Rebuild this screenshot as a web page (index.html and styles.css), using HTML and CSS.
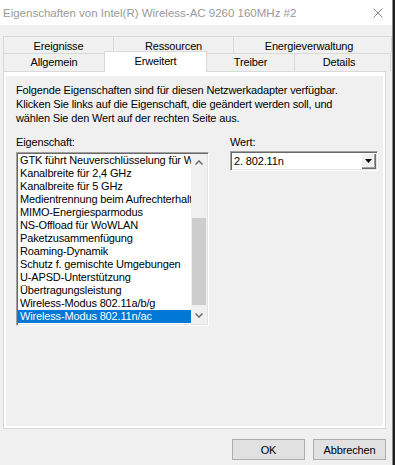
FILE: index.html
```html
<!DOCTYPE html>
<html lang="de">
<head>
<meta charset="utf-8">
<title>Eigenschaften</title>
<link rel="stylesheet" href="styles.css">
</head>
<body>
<div class="window">
  <div class="titlebar">
    <span class="title">Eigenschaften von Intel(R) Wireless-AC 9260 160MHz #2</span>
    <svg class="close" width="10" height="10" viewBox="0 0 10 10"><path d="M0.5 0.5 L9.5 9.5 M9.5 0.5 L0.5 9.5" stroke="#8c8c8c" stroke-width="1" fill="none"/></svg>
  </div>
  <div class="tabs">
    <div class="tabrow row1">
      <div class="tab t-ereig">Ereignisse</div>
      <div class="tab t-ress">Ressourcen</div>
      <div class="tab t-energ last">Energieverwaltung</div>
    </div>
    <div class="tabrow row2">
      <div class="tab t-allg">Allgemein</div>
      <div class="tab t-erw selected">Erweitert</div>
      <div class="tab t-treib">Treiber</div>
      <div class="tab t-det last">Details</div>
    </div>
  </div>
  <div class="panel">
    <div class="page">
      <p class="intro">Folgende Eigenschaften sind für diesen Netzwerkadapter verfügbar.<br>Klicken Sie links auf die Eigenschaft, die geändert werden soll, und<br>wählen Sie den Wert auf der rechten Seite aus.</p>
      <div class="fields">
        <div class="col col-left">
          <div class="label">Eigenschaft:</div>
          <div class="listbox">
            <div class="items">
              <div class="item">GTK führt Neuverschlüsselung für WoWLAN durch</div>
              <div class="item">Kanalbreite für 2,4 GHz</div>
              <div class="item">Kanalbreite für 5 GHz</div>
              <div class="item">Medientrennung beim Aufrechterhalten</div>
              <div class="item">MIMO-Energiesparmodus</div>
              <div class="item">NS-Offload für WoWLAN</div>
              <div class="item">Paketzusammenfügung</div>
              <div class="item">Roaming-Dynamik</div>
              <div class="item">Schutz f. gemischte Umgebungen</div>
              <div class="item">U-APSD-Unterstützung</div>
              <div class="item">Übertragungsleistung</div>
              <div class="item">Wireless-Modus 802.11a/b/g</div>
              <div class="item selected">Wireless-Modus 802.11n/ac</div>
            </div>
            <div class="scrollbar">
              <div class="sb-btn"><svg width="8" height="5" viewBox="0 0 8 5"><path d="M0.5 4.5 L4 1 L7.5 4.5" stroke="#606060" stroke-width="1.3" fill="none"/></svg></div>
              <div class="sb-track"><div class="sb-thumb"></div></div>
              <div class="sb-btn"><svg width="8" height="5" viewBox="0 0 8 5"><path d="M0.5 0.5 L4 4 L7.5 0.5" stroke="#606060" stroke-width="1.3" fill="none"/></svg></div>
            </div>
          </div>
        </div>
        <div class="col col-right">
          <div class="label">Wert:</div>
          <div class="combo">
            <span class="combo-text">2. 802.11n</span>
            <div class="combo-btn"><svg width="7" height="4" viewBox="0 0 7 4"><path d="M0 0 H7 L3.5 4 Z" fill="#000"/></svg></div>
          </div>
        </div>
      </div>
    </div>
  </div>
  <div class="buttons">
    <button class="btn">OK</button>
    <button class="btn">Abbrechen</button>
  </div>
</div>
</body>
</html>
```
FILE: styles.css
```css
html, body {
  margin: 0;
  padding: 0;
}
body {
  background: #202020;
  font-family: "Liberation Sans", Arial, sans-serif;
  font-size: 11px;
  letter-spacing: -0.15px;
  color: #000;
}
.window {
  width: 392px;
  height: 465px;
  background: #f0f0f0;
  border-right: 1px solid #8a8a8a;
  overflow: hidden;
}
.titlebar {
  height: 25px;
  background: #fff;
  display: flex;
  align-items: center;
  padding-left: 3px;
}
.title {
  color: #999;
  font-size: 11.5px;
  letter-spacing: 0;
  white-space: nowrap;
}
.close {
  margin-left: auto;
  margin-right: 9px;
}
.tabs {
  margin-top: 11px;
  padding-left: 3px;
}
.tabrow {
  display: flex;
  align-items: flex-start;
}
.row1 { height: 17px; }
.row2 { height: 18px; }
.tab {
  box-sizing: border-box;
  border-top: 1px solid #d9d9d9;
  border-left: 1px solid #d9d9d9;
  background: #f0f0f0;
  text-align: center;
  white-space: nowrap;
}
.row1 .tab { height: 17px; line-height: 16px; padding-top: 1px; }
.row2 .tab { height: 18px; line-height: 17px; }
.tab.last { border-right: 1px solid #d9d9d9; padding-right: 7px; }
.t-ereig { width: 110px; }
.t-ress { width: 120px; }
.t-energ { width: 159px; }
.t-allg { width: 101px; }
.t-erw { width: 103px; }
.t-treib { width: 88px; }
.t-det { width: 97px; }
.row2 .tab.selected {
  position: relative;
  z-index: 2;
  margin-top: -2px;
  height: 21px;
  line-height: 18px;
  background: #fff;
  border-right: 1px solid #d9d9d9;
  margin-right: -1px;
}
.panel {
  box-sizing: border-box;
  margin-left: 3px;
  width: 383px;
  height: 358px;
  border: 1px solid #d9d9d9;
  background: #fff;
  padding: 4px 2px 2px 2px;
}
.page {
  height: 100%;
  box-sizing: border-box;
  background: #f0f0f0;
  padding: 7px 0 0 10px;
}
.intro {
  margin: 0;
  line-height: 14px;
  white-space: nowrap;
}
.fields {
  display: flex;
  margin-top: 10px;
  gap: 21px;
}
.label {
  line-height: 14px;
}
.col-left { width: 193px; }
.col-right { width: 148px; }
.listbox {
  margin-top: 3px;
  box-sizing: border-box;
  height: 174px;
  border: 1px solid;
  border-color: #a0a0a0 #fff #fff #a0a0a0;
  box-shadow: inset 1px 1px 0 #696969, inset -1px -1px 0 #e3e3e3;
  padding: 1px;
  background: #fff;
  display: flex;
}
.items {
  flex: 1;
  min-width: 0;
  overflow: hidden;
}
.item {
  height: 13px;
  line-height: 13px;
  padding-left: 2px;
  white-space: nowrap;
  overflow: hidden;
}
.item.selected {
  background: #0078d7;
  color: #fff;
}
.scrollbar {
  width: 16px;
  background: #f0f0f0;
  display: flex;
  flex-direction: column;
}
.sb-btn {
  height: 17px;
  display: flex;
  align-items: center;
  justify-content: center;
}
.sb-track {
  flex: 1;
}
.sb-thumb {
  margin: 47px 1px 0 1px;
  height: 87px;
  background: #cdcdcd;
}
.combo {
  margin-top: 2px;
  box-sizing: border-box;
  height: 20px;
  border: 1px solid;
  border-color: #a0a0a0 #fff #fff #a0a0a0;
  box-shadow: inset 1px 1px 0 #696969, inset -1px -1px 0 #e3e3e3;
  padding: 1px;
  background: #fff;
  display: flex;
  align-items: center;
  justify-content: space-between;
}
.combo-text {
  padding-left: 2px;
  line-height: 14px;
}
.combo-btn {
  width: 15px;
  height: 16px;
  box-sizing: border-box;
  background: #f0f0f0;
  box-shadow: inset 1px 1px 0 #fff, inset -1px -1px 0 #696969, inset -2px -2px 0 #a0a0a0;
  display: flex;
  align-items: center;
  justify-content: center;
}
.buttons {
  display: flex;
  justify-content: flex-end;
  gap: 8px;
  margin-top: 10px;
  padding-right: 6px;
}
.btn {
  width: 73px;
  height: 21px;
  padding: 0;
  border: 1px solid #adadad;
  background: #e1e1e1;
  font-family: "Liberation Sans", Arial, sans-serif;
  font-size: 11px;
  letter-spacing: -0.15px;
  color: #000;
}
```
